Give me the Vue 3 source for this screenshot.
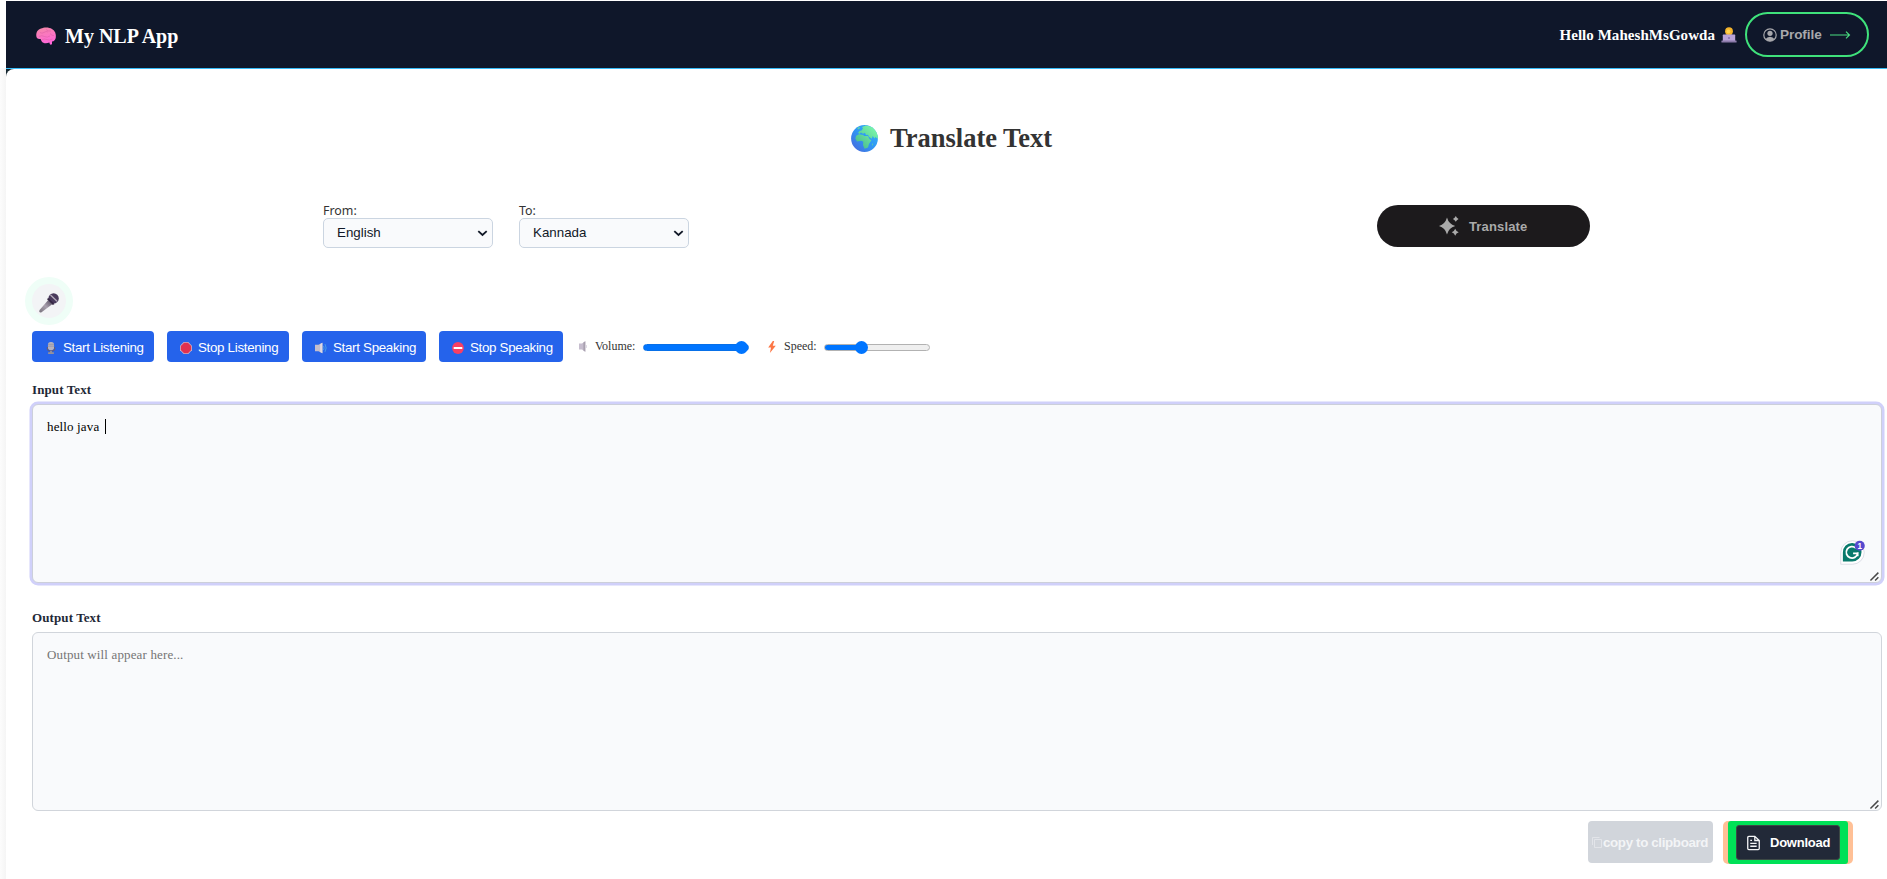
<script setup>
import { ref } from 'vue'

const from = ref('English')
const to = ref('Kannada')
const input = ref('hello java ')
const output = ref('')
const volume = ref(100)
const speed = ref(33)
const actions = [
  { label: 'Start Listening', icon: 'studio', width: 122 },
  { label: 'Stop Listening', icon: 'stop', width: 122 },
  { label: 'Start Speaking', icon: 'speaker', width: 124 },
  { label: 'Stop Speaking', icon: 'noentry', width: 124 }
]
</script>

<template>
  <div class="page">
    <header class="bar">
      <svg class="brain" viewBox="0 0 20 18">
        <defs>
          <linearGradient id="brainFill" x1="0" y1="0" x2="0.3" y2="1">
            <stop offset="0" stop-color="#f58aa6" /><stop offset="1" stop-color="#ff66d8" />
          </linearGradient>
        </defs>
        <path d="M0.3 9C0 5 2 2.5 5 1.6C8 0 13 0 16 2C19 3.8 20.3 7 19.8 10.5C19.6 12.8 18 14.3 16 14.6L16 17C15.4 18 14.2 18 13.8 17L13.4 15.6C10 16.8 7 16.4 5.6 14.2C4.8 12.8 5 12.2 4.4 12C2 12.4 0.4 11 0.3 9Z" fill="url(#brainFill)" />
        <path d="M4 5.5Q6 7 8 5.4T12 5M10 2.5Q12 4.5 15 4M3 9.5Q6 8 8.5 9.5T14 9M14 6.5Q16 9 18 8.5M6 12.5Q9 11.5 11 12.6T16.5 12" fill="none" stroke="#dd5fa8" stroke-width=".6" />
      </svg>
      <span class="brand">My NLP App</span>
      <span class="hello">Hello MaheshMsGowda</span>
      <svg class="person" viewBox="0 0 16 16">
        <path d="M2.5 11Q3 7 8 7T13.5 11Z" fill="#7661a5" />
        <circle cx="8" cy="4.2" r="3.9" fill="#f5b52c" />
        <circle cx="7.4" cy="4.5" r="2" fill="#ffd34e" />
        <rect x="1.8" y="7.6" width="12.4" height="6.6" rx=".6" fill="#b9a3d8" />
        <rect x=".4" y="13.6" width="15.2" height="1.9" rx=".5" fill="#8c7ba9" />
        <circle cx="8" cy="11" r=".9" fill="#8069a8" />
      </svg>
      <button class="profile">
        <svg class="avatar" viewBox="0 0 14 14">
          <circle cx="7" cy="7" r="6.2" fill="none" stroke="#a8a8ac" stroke-width="1.2" />
          <circle cx="7" cy="5.3" r="2.6" fill="#a8a8ac" />
          <path d="M2.4 11.3Q4 8.8 7 8.8T11.6 11.3Q9.5 13.3 7 13.3T2.4 11.3Z" fill="#a8a8ac" />
        </svg>
        <span>Profile</span>
        <svg class="arrow" viewBox="0 0 20 8"><path d="M0 4H19.3M16 .6L19.5 4L16 7.4" fill="none" stroke="#4ade80" stroke-width="1.1" /></svg>
      </button>
    </header>

    <div class="backing">
      <main class="card">
        <h1>
          <svg class="globe" viewBox="0 0 27 27">
            <defs>
              <linearGradient id="sea" x1="1" y1="0" x2="0" y2="1"><stop offset="0" stop-color="#35b8f5" /><stop offset=".5" stop-color="#2f97f3" /><stop offset="1" stop-color="#4b62da" /></linearGradient>
              <linearGradient id="land" x1="1" y1="0" x2="0" y2="1"><stop offset="0" stop-color="#83ffaf" /><stop offset="1" stop-color="#42b488" /></linearGradient>
              <clipPath id="disc"><circle cx="13.5" cy="13.5" r="13.4" /></clipPath>
            </defs>
            <g clip-path="url(#disc)">
              <rect width="27" height="27" fill="url(#sea)" />
              <path d="M5.2 10.8L8 9.3L12.3 10L13 11L17 11L18.4 14L20.4 15.3L18 19L17 22.5L13.5 23.7L12 20L12.3 16.8L10.3 15.8L6 16.4L4.3 13.5ZM7 7.8L9 5.5L10 6L12 3.4L11 2L15 .6L22 2L27 8V14L24.4 12L23.5 13.6L21.7 11L20.8 13.7L18 11.8L17 9.8L15 10L14 7.8L12 8.8L10 7.6L8.5 9ZM6 3L9 2L8 4.4ZM21 19.5L21.8 18L22 21Z" fill="url(#land)" />
            </g>
          </svg>
          <span>Translate Text</span>
        </h1>

        <section class="languages">
          <label class="field">
            <span>From:</span>
            <select v-model="from"><option>English</option><option>Kannada</option></select>
            <svg class="chevron" viewBox="0 0 12 8"><path d="M1.2 1.3L6 5.7L10.8 1.3" fill="none" stroke="#111827" stroke-width="2.1" /></svg>
          </label>
          <label class="field">
            <span>To:</span>
            <select v-model="to"><option>Kannada</option><option>English</option></select>
            <svg class="chevron" viewBox="0 0 12 8"><path d="M1.2 1.3L6 5.7L10.8 1.3" fill="none" stroke="#111827" stroke-width="2.1" /></svg>
          </label>
          <button class="translate">
            <svg viewBox="0 0 20 20" fill="#aaa">
              <path d="M8 1.6Q9.8 8.2 16.2 10Q9.8 11.8 8 18.4Q6.2 11.8 0 10Q6.2 8.2 8 1.6Z" />
              <path d="M16.8 0Q17.6 2 19.6 2.9Q17.6 3.8 16.8 5.8Q15.9 3.8 13.9 2.9Q15.9 2 16.8 0ZM16.2 12.8Q17.1 15.4 19.7 16.3Q17.1 17.2 16.2 19.8Q15.3 17.2 12.7 16.3Q15.3 15.4 16.2 12.8Z" />
            </svg>
            <span>Translate</span>
          </button>
        </section>

        <button class="mic">
          <svg viewBox="0 0 20 20">
            <defs><linearGradient id="handle" x1="0" y1="1" x2="1" y2="0"><stop offset="0" stop-color="#77727b" /><stop offset=".5" stop-color="#a9a0ae" /><stop offset="1" stop-color="#51475b" /></linearGradient></defs>
            <path d="M9 7.2L13.2 11.3L2.6 19.2Q.8 20 .2 18.6Q0 17.9 .8 16.7Z" fill="url(#handle)" />
            <circle cx="14.6" cy="5.4" r="5.2" fill="#493a5c" />
            <path d="M9 4.7L15.6 11.1L13.8 11.9L8.2 6.6Z" fill="#362744" />
            <path d="M11.5 2L18 8.2" stroke="#b5acbc" stroke-width="1.3" />
          </svg>
        </button>

        <section class="controls">
          <button v-for="a in actions" :key="a.label" class="action" :style="{ width: a.width + 'px' }">
            <svg v-if="a.icon === 'studio'" viewBox="0 0 13 13">
              <rect x="3.2" y="0" width="6.6" height="9" rx="3" fill="#b7b3bf" />
              <path d="M3.2 2.5H9.8M3.2 4.5H9.8" stroke="#8f8b98" stroke-width=".7" />
              <path d="M2.6 5.5V7.2Q2.6 9.6 6.5 9.6T10.4 7.2V5.5" fill="none" stroke="#615c7d" stroke-width="1.3" />
              <path d="M5.5 9.6H7.5V11.2H9.6V13H3.4V11.2H5.5Z" fill="#969199" />
            </svg>
            <svg v-else-if="a.icon === 'stop'" viewBox="0 0 13 13">
              <path d="M4 0H9L13 4V9L9 13H4L0 9V4Z" fill="#c6b2c8" /><path d="M4.4 .9H8.6L12.1 4.4V8.6L8.6 12.1H4.4L.9 8.6V4.4Z" fill="#e1314f" />
            </svg>
            <svg v-else-if="a.icon === 'speaker'" viewBox="0 0 13 13">
              <path d="M0 3H3.8L8 .8V12.2L3.8 10H0Z" fill="#c4bdcb" /><path d="M5.6 2.3L8 .8V12.2L5.6 10.7Z" fill="#ded8e2" />
              <path d="M9.2 4.2Q10.5 6.5 9.2 8.8M10.8 2.3Q13.4 6.5 10.8 10.7" fill="none" stroke="#469fe8" stroke-width="1" />
            </svg>
            <svg v-else viewBox="0 0 13 13"><circle cx="6.5" cy="6.5" r="6.4" fill="#f83f64" /><rect x="1.8" y="5.3" width="9.4" height="2.4" rx=".5" fill="#fff" /></svg>
            <span>{{ a.label }}</span>
          </button>
          <label class="slider volume">
            <svg viewBox="0 0 8 11"><path d="M0 2.6H3L6.3 .3V10.7L3 8.4H0Z" fill="#c6bdce" /><path d="M4.4 1.6L6.3 .3V10.7L4.4 9.4Z" fill="#a9a1b0" /><path d="M7 4Q8 5.5 7 7" fill="none" stroke="#d4cddb" /></svg>
            <span>Volume:</span>
            <input v-model="volume" type="range" min="0" max="100" :style="{ '--fill': volume + '%' }" />
          </label>
          <label class="slider speed">
            <svg viewBox="0 0 8 12"><path d="M4.8 0L.2 6.6H3L1.9 12L7.8 4.7H4.8L6.2 0Z" fill="#fc7746" /></svg>
            <span>Speed:</span>
            <input v-model="speed" type="range" min="0" max="100" :style="{ '--fill': speed + '%' }" />
          </label>
        </section>

        <section class="entry">
          <h2>Input Text</h2>
          <div class="box focused">
            <textarea v-model="input"></textarea>
            <i class="caret"></i>
            <svg class="assistant" viewBox="0 0 26 26">
              <path d="M.8 25.2V13A12.2 12.2 0 1 1 13 25.2Z" fill="#fff" stroke="#d3d4df" stroke-width=".8" />
              <path d="M3 22.4V13A9.7 9.7 0 1 1 12.7 22.4Z" fill="#08796b" />
              <path d="M16.5 8.3A6 6 0 1 0 18.4 14H13.6M18.4 12.8V17" fill="none" stroke="#fff" stroke-width="1.8" />
              <circle cx="20.5" cy="6" r="5.3" fill="#5648ce" />
              <text x="20.5" y="9" text-anchor="middle" fill="#fff" font-family="Liberation Sans, sans-serif" font-size="8.5" font-weight="700">1</text>
            </svg>
            <svg class="grip" viewBox="0 0 10 10"><path d="M.5 9.5L9.3 .7M5.7 9.5L9.3 5.9" stroke="#484848" stroke-width="1.6" /></svg>
          </div>
        </section>

        <section class="entry result">
          <h2>Output Text</h2>
          <div class="box">
            <textarea v-model="output" placeholder="Output will appear here..."></textarea>
            <svg class="grip" viewBox="0 0 10 10"><path d="M.5 9.5L9.3 .7M5.7 9.5L9.3 5.9" stroke="#484848" stroke-width="1.6" /></svg>
          </div>
        </section>

        <footer>
          <button class="copy">
            <svg viewBox="0 0 10 11" fill="none" stroke="#e2e4e9"><path d="M2.5 2.5H9.5V10.5H2.5ZM.5 8V.5H7.5" /></svg>
            <span>copy to clipboard</span>
          </button>
          <div class="outer">
            <div class="inner">
              <button class="download">
                <svg viewBox="0 0 14 16" fill="none" stroke="#f4f5f7" stroke-width="1.4"><path d="M8.4 .8H2Q.8 .8 .8 2V14Q.8 15.2 2 15.2H12Q13.2 15.2 13.2 14V5.3ZM8.4 .8V5.3H13.2M3.5 5.2H5.4M3.5 8.4H10.4M3.5 11.5H10.4" /></svg>
                <span>Download</span>
              </button>
            </div>
          </div>
        </footer>
      </main>
    </div>
  </div>
</template>

<style>
body { background: #fff; overflow: hidden; }
</style>

<style scoped>
* { box-sizing: border-box; }
.page { width: 1887px; height: 879px; padding: 1px 0 0 6px; overflow: hidden; background: linear-gradient(90deg, #fcfcfc, #f5f5f5 6px, #fff 6px); font-family: "Liberation Serif", serif; }
svg { display: block; flex: none; overflow: visible; }
button { border: 0; padding: 0; font-family: "Liberation Sans", sans-serif; white-space: nowrap; }
span { white-space: nowrap; }
.bar { height: 68px; display: flex; align-items: center; background: #0f172a; border-bottom: 1px solid #38bdf8; padding: 0 18px 0 30px; color: #fff; box-shadow: -6px -1px 0 #fff; }
.brain { width: 20px; height: 18px; margin-top: 3px; }
.brand { margin: 4px auto 0 9px; font-size: 20px; font-weight: 700; }
.hello { font-size: 15px; letter-spacing: .05px; font-weight: 700; margin-right: 6px; margin-top: 1px; }
.person { width: 16px; height: 16px; margin-right: 8px; margin-top: 1px; }
.profile { width: 124px; height: 45px; border: 2px solid #3fe27b; border-radius: 23px; background: transparent; display: flex; align-items: center; padding-left: 16px; color: #a8a8ac; font-size: 13.33px; font-weight: 700; }
.avatar { width: 14px; height: 14px; margin-right: 3px; }
.profile span { width: 41px; font-size: 13.6px; letter-spacing: -.1px; }
.arrow { width: 20px; height: 8px; margin-left: 9px; }
.backing { background: linear-gradient(#15262f 12px, #fff 12px); }
.card { height: 810px; background: #fff; border-radius: 8px 0 0 0; padding: 53px 5px 0 26px; display: flex; flex-direction: column; }
h1 { height: 32px; margin: 0 0 0 819px; display: flex; align-items: center; color: #333; font-size: 26.5px; line-height: 32px; font-weight: 700; }
.globe { width: 27px; height: 27px; margin-right: 12px; }
.languages { margin: 49px 0 0 291px; height: 44px; display: flex; align-items: flex-start; }
.field { width: 170px; margin-right: 26px; display: flex; flex-direction: column; position: relative; color: #333; font: 12.4px/15px "Noto Sans", sans-serif; }
.field select { appearance: none; width: 170px; height: 30px; border: 1px solid #cbd5e1; border-radius: 5px; padding: 0 0 2px 13px; background: #f9fafc; color: #111827; font: 13.33px "Liberation Sans", sans-serif; }
.chevron { position: absolute; right: 5px; top: 27px; width: 11px; height: 7px; }
.translate { width: 213px; height: 42px; margin: 2px 0 0 662px; border-radius: 21px; background: #1c1a1c; color: #aaa; font-size: 13px; letter-spacing: .15px; font-weight: 700; display: flex; align-items: center; padding-left: 62px; }
.translate svg { width: 20px; height: 20px; margin-right: 10px; }
.mic { width: 34px; height: 34px; margin-top: 37px; border-radius: 50%; background: #f3f4f6; box-shadow: 0 0 0 7px #effef7; display: grid; place-items: center; }
.mic svg { width: 20px; height: 20px; margin-top: 3px; }
.controls { display: flex; align-items: center; height: 31px; margin-top: 13px; }
.action { height: 31px; margin-right: 13px; border-radius: 4px; background: #2563eb; color: #fff; font-size: 13.33px; letter-spacing: -.3px; display: flex; align-items: center; padding-left: 13px; }
.action svg { width: 12px; height: 12px; margin: 2px 6px 0 0; }
.action span { margin-top: 2px; }
.slider { display: flex; align-items: center; color: #333; font-size: 12px; }
.volume { margin-left: 3px; width: 189px; }
.volume svg { width: 8px; height: 11px; margin-right: 8px; }
.volume span { width: 48px; }
.speed svg { width: 8px; height: 12px; margin-right: 8px; }
.speed span { width: 40px; }
.slider input { appearance: none; width: 106px; height: 7px; margin: 2px 0 0; border-radius: 4px; border: 1px solid #b2b2b2; background: linear-gradient(90deg, #0075ff var(--fill), #efefef var(--fill)); }
.volume input { border-color: #0870e8; }
.slider input::-webkit-slider-thumb { appearance: none; width: 13px; height: 13px; border-radius: 50%; background: #0075ff; }
.entry { margin-top: 20px; }
h2 { margin: 0; height: 22px; font-size: 13px; letter-spacing: .1px; line-height: 15px; font-weight: 700; color: #1f2937; }
.box { position: relative; height: 179px; }
.box textarea { display: block; resize: none; outline: 0; width: 1850px; height: 179px; margin: 0; border: 1px solid #d1d5db; border-radius: 6px; background: #f9fafc; padding: 13px 14px; font: 13px/18px "Liberation Serif", serif; letter-spacing: .14px; color: #000; }
.box textarea::placeholder { color: #757575; opacity: 1; }
.focused textarea { border-color: #cccfda; box-shadow: 0 0 0 2.5px #d0d0fa; }
.caret { position: absolute; left: 73px; top: 15px; width: 1px; height: 15px; background: #000; }
.assistant { position: absolute; right: 17px; top: 136px; width: 25px; height: 25px; }
.grip { position: absolute; right: 3px; bottom: 2px; width: 9px; height: 9px; }
.result { margin-top: 27px; }
footer { display: flex; justify-content: flex-end; margin: 10px 29px 0 0; }
.copy { width: 125px; height: 42px; margin-right: 10px; border-radius: 4px; background: #d1d5db; color: #f3f4f6; font-size: 13.33px; letter-spacing: -.35px; font-weight: 700; display: flex; align-items: center; padding-left: 4px; }
.copy svg { width: 10px; height: 11px; margin-right: 1px; }
.outer { width: 130px; height: 43px; padding: 0 5px; border-radius: 5px; background: #ffc096; }
.inner { width: 120px; height: 43px; border-radius: 3px; background: #00e157; padding: 4px 8px; }
.download { width: 104px; height: 35px; border: 1px solid #3c4945; border-radius: 3px; background: #222938; color: #fff; font-size: 13px; letter-spacing: -.25px; font-weight: 700; display: flex; align-items: center; padding-left: 10px; }
.download svg { width: 13px; height: 16px; margin-right: 10px; }
</style>
